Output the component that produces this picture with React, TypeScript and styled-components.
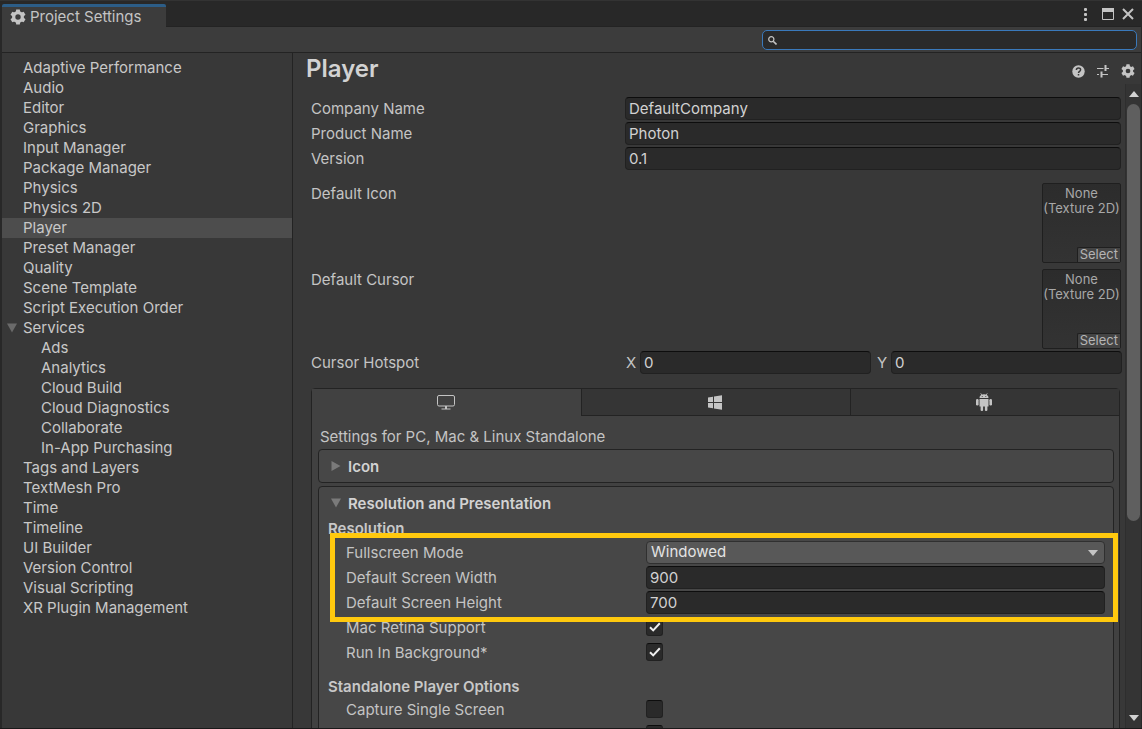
import React, { useId } from "react";
import styled, { createGlobalStyle, css } from "styled-components";

const GlobalStyle = createGlobalStyle`
  *, *::before, *::after { box-sizing: border-box; }
  html, body { margin: 0; padding: 0; background: #282828; }
  body, button, input, select {
    font-family: Inter, "Liberation Sans", sans-serif;
    font-size: 15px;
  }
`;

const Window = styled.div`
  display: flex;
  flex-direction: column;
  height: 100vh;
  overflow: hidden;
  padding: 3px 1px 0 2px;
  border-top: 1px solid #333;
  border-bottom: 1px solid #191919;
  background: #282828;
  color: #c4c4c4;
`;

const TitleBar = styled.header`
  display: flex;
  flex: none;
  height: 23px;
  align-items: stretch;
  justify-content: space-between;
  box-shadow: inset 0 -1px #232323;
`;

const WindowTab = styled.h1`
  display: flex;
  align-items: center;
  gap: 4px;
  width: 164px;
  margin: 0;
  padding: 0 8px 1px;
  border-top: 3px solid #2c5d87;
  border-radius: 2px 2px 0 0;
  background: #3c3c3c;
  font-size: 15px;
  font-weight: 400;
  white-space: nowrap;
`;

const WindowActions = styled.div`
  display: flex;
  align-items: center;
  gap: 8px;
  padding: 0 7px 3px 0;
`;

const IconButton = styled.button`
  display: flex;
  align-items: center;
  justify-content: center;
  padding: 0;
  border: 0;
  background: none;
  color: #c4c4c4;
`;

const Toolbar = styled.div`
  display: flex;
  flex: none;
  justify-content: flex-end;
  height: 26px;
  padding: 3px 4px 2px;
  border-bottom: 1px solid #232323;
  background: #3c3c3c;
`;

const SearchBox = styled.label`
  display: flex;
  align-items: center;
  width: 375px;
  height: 20px;
  padding: 0 5px;
  border: 1px solid #3a79bb;
  border-radius: 5px;
  background: #2a2a2a;
`;

const SearchInput = styled.input`
  flex: 1;
  min-width: 0;
  padding: 0 4px;
  border: 0;
  outline: 0;
  background: none;
  color: #d2d2d2;
`;

const Body = styled.div`
  display: flex;
  flex: 1;
  min-height: 0;
  background: #383838;
`;

const Sidebar = styled.nav`
  flex: none;
  width: 291px;
  padding-top: 5px;
  border-right: 1px solid #232323;
`;

const NavItem = styled.a<{ $depth: number; $selected: boolean }>`
  display: flex;
  align-items: center;
  height: 20px;
  padding-bottom: 2px;
  padding-left: ${(p) => (p.$depth ? 39 : 21)}px;
  background: ${(p) => (p.$selected ? "#4d4d4d" : "none")};
  color: #c8c8c8;
  text-decoration: none;
  white-space: nowrap;
`;

const NavArrow = styled.span`
  display: flex;
  width: 21px;
  margin-left: -21px;
  padding-top: 2px;
  padding-left: 5px;
`;

const Main = styled.main`
  display: flex;
  flex: 1;
  flex-direction: column;
  min-width: 0;
`;

const Heading = styled.div`
  display: flex;
  flex: none;
  align-items: center;
  justify-content: space-between;
  height: 31px;
  padding: 0 6px 0 13px;
`;

const PageTitle = styled.h2`
  margin: 0;
  color: #d2d2d2;
  font-size: 24px;
  font-weight: 600;
  line-height: 30px;
`;

const HeadingActions = styled.div`
  display: flex;
  gap: 12px;
  padding-top: 5px;
`;

const ScrollArea = styled.div`
  display: flex;
  flex: 1;
  min-height: 0;
`;

const Content = styled.div`
  flex: 1;
  min-width: 0;
  overflow: hidden;
  padding: 12px 3px 0 18px;
`;

const Scrollbar = styled.div`
  display: flex;
  flex: none;
  flex-direction: column;
  width: 16px;
  padding: 0 1px;
  border-left: 1px solid #2e2e2e;
  background: #343434;
`;

const ScrollButton = styled(IconButton)`
  height: 20px;
`;

const ScrollTrack = styled.div`
  display: flex;
  flex: 1;
  flex-direction: column;
`;

const ScrollThumb = styled.div`
  height: 69%;
  border-radius: 7px;
  background: #5f5f5f;
`;

const fieldBox = css`
  height: 23px;
  border: 1px solid #212121;
  border-top-color: #0d0d0d;
  border-radius: 4px;
  background: #2a2a2a;
`;

const Row = styled.div`
  display: flex;
  align-items: center;
  height: 25px;
`;

const RowLabel = styled.label<{ $nested?: boolean }>`
  flex: none;
  width: ${(p) => (p.$nested ? 300 : 314)}px;
  white-space: nowrap;
`;

const TextInput = styled.input`
  ${fieldBox}
  flex: 1;
  min-width: 0;
  padding: 0 3px;
  outline: 0;
  color: #d2d2d2;
`;

const IdentityRows = styled.section`
  padding-right: 1px;
  padding-bottom: 12px;
`;

const TextureRow = styled.div`
  display: flex;
  justify-content: space-between;
  height: 86px;
  padding-right: 1px;
`;

const TextureLabel = styled.span`
  line-height: 22px;
`;

const TextureSlot = styled.div`
  display: flex;
  flex-direction: column;
  align-items: flex-end;
  justify-content: space-between;
  width: 79px;
  height: 80px;
  border: 1px solid #1f1f1f;
  border-radius: 2px;
  background: linear-gradient(#2c2c2c, #333);
  color: #a8a8a8;
  font-size: 13px;
`;

const TextureName = styled.span`
  align-self: center;
  padding-top: 2px;
  line-height: 15px;
  text-align: center;
  white-space: nowrap;
`;

const SelectButton = styled.button`
  height: 15px;
  padding: 0 2px 1px;
  border: 0;
  border-top: 1px solid #1f1f1f;
  border-left: 1px solid #1f1f1f;
  border-radius: 2px 0 0 0;
  background: #444;
  color: #b4b4b4;
  font-size: 13px;
  line-height: 13px;
`;

const HotspotRow = styled(Row)`
  margin-top: -5px;
`;

const AxisLabel = styled.label`
  flex: none;
  width: 15px;
  padding-left: 1px;
`;

const AxisGap = styled.span`
  flex: none;
  width: 5px;
`;

const PlatformPanel = styled.section`
  margin-top: 13px;
  margin-right: 2px;
  border: 1px solid #232323;
  border-radius: 4px 4px 0 0;
  background: #414141;
`;

const PlatformTabs = styled.div`
  display: grid;
  grid-template-columns: repeat(3, 1fr);
`;

const PlatformTab = styled(IconButton)<{ $active?: boolean }>`
  height: 27px;
  padding-right: 2px;
  background: ${(p) => (p.$active ? "#414141" : "#353535")};
  border-bottom: 1px solid ${(p) => (p.$active ? "#414141" : "#232323")};
  & + & { border-left: 1px solid #232323; }
`;

const PlatformBody = styled.div`
  padding: 9px 5px 0 6px;
`;

const PlatformTitle = styled.p`
  margin: 0 0 0 2px;
  line-height: 24px;
`;

const Group = styled.section`
  margin-bottom: 3px;
  border: 1px solid #232323;
  border-radius: 4px;
  background: #474747;
`;

const GroupToggle = styled.button`
  display: flex;
  align-items: center;
  gap: 7px;
  width: 100%;
  height: 32px;
  padding: 0 12px;
  border: 0;
  background: none;
  color: #d2d2d2;
  font-weight: 600;
`;

const GroupBody = styled.div`
  padding: 0 8px 8px 9px;
`;

const SubHeading = styled.h3`
  margin: 0;
  color: #c8c8c8;
  font-size: 15px;
  font-weight: 600;
  line-height: 20px;
`;

const Indented = styled.div`
  padding-left: 18px;
`;

const HighlightArea = styled(Indented)`
  position: relative;
  padding-top: 1px;
`;

const HighlightFrame = styled.div`
  position: absolute;
  z-index: 1;
  top: -6px;
  right: -13px;
  bottom: -7px;
  left: 2px;
  border: 5px solid #ffc90e;
  pointer-events: none;
`;

const SelectWrap = styled.div`
  display: grid;
  flex: 1;
  align-items: center;
  min-width: 0;
`;

const Dropdown = styled.select`
  grid-area: 1 / 1;
  width: 100%;
  height: 23px;
  padding: 0 4px 2px;
  appearance: none;
  border: 1px solid #303030;
  border-radius: 4px;
  outline: 0;
  background: #585858;
  color: #e4e4e4;
`;

const DropdownArrow = styled.svg`
  grid-area: 1 / 1;
  justify-self: end;
  margin-right: 7px;
  pointer-events: none;
`;

const CheckWrap = styled.span`
  display: grid;
  place-items: center;
  padding-bottom: 2px;
`;

const Checkbox = styled.input`
  grid-area: 1 / 1;
  appearance: none;
  width: 17px;
  height: 18px;
  margin: 0;
  border: 1px solid #212121;
  border-top-color: #0d0d0d;
  border-radius: 3px;
  background: #2a2a2a;
`;

const CheckMark = styled.svg`
  grid-area: 1 / 1;
  pointer-events: none;
`;

const Spacer = styled.div`
  height: 12px;
`;

function GearIcon({ size }: { size: number }) {
  const teeth = [0, 60, 120, 180, 240, 300];
  return (
    <svg width={size} height={size} viewBox="0 0 16 16" fill="currentColor" aria-hidden="true">
      <circle cx="8" cy="8" r="4.3" fill="none" stroke="currentColor" strokeWidth="3.2" />
      {teeth.map((a) => (
        <path key={a} d="M5.700 3.4 6.200 .4h3.600L10.300 3.4z" transform={`rotate(${a} 8 8)`} />
      ))}
    </svg>
  );
}

function Triangle({ dir, color = "#7a7a7a" }: { dir: "down" | "right"; color?: string }) {
  return (
    <svg width="10" height="10" viewBox="0 0 10 10" fill={color} aria-hidden="true">
      <path d={dir === "down" ? "M0 .5h10L5 9.5z" : "M.5 0v10L9.5 5z"} />
    </svg>
  );
}

type NavEntry = { label: string; depth?: number; open?: boolean };

const entries: NavEntry[] = [
  { label: "Adaptive Performance" },
  { label: "Audio" },
  { label: "Editor" },
  { label: "Graphics" },
  { label: "Input Manager" },
  { label: "Package Manager" },
  { label: "Physics" },
  { label: "Physics 2D" },
  { label: "Player" },
  { label: "Preset Manager" },
  { label: "Quality" },
  { label: "Scene Template" },
  { label: "Script Execution Order" },
  { label: "Services", open: true },
  { label: "Ads", depth: 1 },
  { label: "Analytics", depth: 1 },
  { label: "Cloud Build", depth: 1 },
  { label: "Cloud Diagnostics", depth: 1 },
  { label: "Collaborate", depth: 1 },
  { label: "In-App Purchasing", depth: 1 },
  { label: "Tags and Layers" },
  { label: "TextMesh Pro" },
  { label: "Time" },
  { label: "Timeline" },
  { label: "UI Builder" },
  { label: "Version Control" },
  { label: "Visual Scripting" },
  { label: "XR Plugin Management" },
];

function TextRow({ label, value, nested }: { label: string; value: string; nested?: boolean }) {
  const id = useId();
  return (
    <Row>
      <RowLabel htmlFor={id} $nested={nested}>{label}</RowLabel>
      <TextInput id={id} type="text" defaultValue={value} />
    </Row>
  );
}

function CheckRow({ label, checked = false }: { label?: string; checked?: boolean }) {
  const id = useId();
  const [on, setOn] = React.useState(checked);
  return (
    <Row>
      <RowLabel htmlFor={id} $nested>{label}</RowLabel>
      <CheckWrap>
        <Checkbox
          id={id}
          type="checkbox"
          aria-label={label ?? "Player option"}
          checked={on}
          onChange={() => setOn(!on)}
        />
        {on && (
          <CheckMark width="12" height="10" viewBox="0 0 12 10" fill="none" stroke="#eee" strokeWidth="2" aria-hidden="true">
            <path d="M1 5.2 4.2 8.4 10.8 1.2" />
          </CheckMark>
        )}
      </CheckWrap>
    </Row>
  );
}

function TextureField({ label }: { label: string }) {
  return (
    <TextureRow>
      <TextureLabel>{label}</TextureLabel>
      <TextureSlot>
        <TextureName>None<br />(Texture 2D)</TextureName>
        <SelectButton type="button">Select</SelectButton>
      </TextureSlot>
    </TextureRow>
  );
}

export default function App() {
  return (
    <>
      <GlobalStyle />
      <Window>
        <TitleBar>
          <WindowTab><GearIcon size={16} />Project Settings</WindowTab>
          <WindowActions>
            <IconButton type="button" aria-label="Menu">
              <svg width="16" height="14" viewBox="0 0 16 14" fill="currentColor" aria-hidden="true">
                <rect x="6" y="1" width="3" height="3" rx="1" /><rect x="6" y="6" width="3" height="3" rx="1" /><rect x="6" y="11" width="3" height="3" rx="1" />
              </svg>
            </IconButton>
            <IconButton type="button" aria-label="Maximize">
              <svg width="12" height="12" viewBox="0 0 12 12" aria-hidden="true">
                <path d="M.5 .5h11v11H.5z" fill="none" stroke="currentColor" /><path d="M0 0h12v4H0z" fill="currentColor" />
              </svg>
            </IconButton>
            <IconButton type="button" aria-label="Close">
              <svg width="12" height="12" viewBox="0 0 12 12" fill="none" stroke="currentColor" strokeWidth="2" aria-hidden="true">
                <path d="M1 1l10 10M11 1 1 11" />
              </svg>
            </IconButton>
          </WindowActions>
        </TitleBar>
        <Toolbar>
          <SearchBox>
            <svg width="9" height="9" viewBox="0 0 9 9" fill="none" stroke="#c4c4c4" aria-hidden="true">
              <circle cx="3.3" cy="3.3" r="2.6" strokeWidth="1.2" /><path d="M5.2 5.2 8.5 8.5" strokeWidth="1.6" />
            </svg>
            <SearchInput type="text" aria-label="Search" />
          </SearchBox>
        </Toolbar>
        <Body>
          <Sidebar>
            {entries.map((e) => (
              <NavItem key={e.label} href="#" $depth={e.depth ?? 0} $selected={e.label === "Player"}>
                {e.open && <NavArrow><Triangle dir="down" color="#6a6a6a" /></NavArrow>}
                {e.label}
              </NavItem>
            ))}
          </Sidebar>
          <Main>
            <Heading>
              <PageTitle>Player</PageTitle>
              <HeadingActions>
                <IconButton type="button" aria-label="Help">
                  <svg width="13" height="13" viewBox="0 0 13 13" aria-hidden="true">
                    <circle cx="6.5" cy="6.5" r="6.2" fill="currentColor" />
                    <path d="M4.4 5c0-2.700 4.200-2.700 4.200-.2 0 1.500-2.100 1.500-2.100 3.200M6.500 9v1.600" fill="none" stroke="#383838" strokeWidth="1.500" />
                  </svg>
                </IconButton>
                <IconButton type="button" aria-label="Presets">
                  <svg width="12" height="13" viewBox="0 0 12 13" fill="none" stroke="currentColor" aria-hidden="true">
                    <path d="M0 3.500h6.500M9 3.500h3M0 9.500h2M5 9.500h6" strokeWidth="1.200" /><path d="M8.500 0v6M4.500 6.500v6" strokeWidth="2" />
                  </svg>
                </IconButton>
                <IconButton type="button" aria-label="Options"><GearIcon size={14} /></IconButton>
              </HeadingActions>
            </Heading>
            <ScrollArea>
              <Content>
                <IdentityRows>
                  <TextRow label="Company Name" value="DefaultCompany" />
                  <TextRow label="Product Name" value="Photon" />
                  <TextRow label="Version" value="0.1" />
                </IdentityRows>
                <TextureField label="Default Icon" />
                <TextureField label="Default Cursor" />
                <HotspotRow>
                  <RowLabel as="span">Cursor Hotspot</RowLabel>
                  <AxisLabel htmlFor="hotspot-x">X</AxisLabel>
                  <TextInput id="hotspot-x" type="text" defaultValue="0" />
                  <AxisGap />
                  <AxisLabel htmlFor="hotspot-y">Y</AxisLabel>
                  <TextInput id="hotspot-y" type="text" defaultValue="0" />
                </HotspotRow>
                <PlatformPanel>
                  <PlatformTabs>
                    <PlatformTab type="button" $active aria-label="Standalone">
                      <svg width="18" height="15" viewBox="0 0 18 15" fill="none" stroke="currentColor" aria-hidden="true">
                        <rect x=".5" y=".5" width="17" height="10.500" rx="1.500" /><path d="M9 11v3" strokeWidth="2" /><path d="M4.500 14h9" />
                      </svg>
                    </PlatformTab>
                    <PlatformTab type="button" aria-label="Windows">
                      <svg width="14" height="15" viewBox="0 0 14 15" fill="currentColor" aria-hidden="true">
                        <path d="M0 2.500 5 1.700V7H0zM6 1.500 14 .3V7H6zM0 8h5v5.300L0 12.500zM6 8h8v6.700L6 13.500z" />
                      </svg>
                    </PlatformTab>
                    <PlatformTab type="button" aria-label="Android">
                      <svg width="16" height="18" viewBox="0 0 16 18" fill="currentColor" aria-hidden="true">
                        <path d="M3.500 5C3.500 2.500 5.300 1.300 8 1.300S12.500 2.500 12.500 5z" />
                        <path d="M4.700.3 5.800 2M11.300.3 10.200 2" stroke="currentColor" strokeWidth=".8" />
                        <path d="M3.500 6h9v7.500h-9z" />
                        <rect x="0" y="6" width="2.600" height="6.500" rx="1.200" /><rect x="13.400" y="6" width="2.600" height="6.500" rx="1.200" />
                        <rect x="4.600" y="12" width="2.500" height="6" rx="1" /><rect x="8.900" y="12" width="2.500" height="6" rx="1" />
                        <circle cx="6.200" cy="3.400" r=".5" fill="#353535" /><circle cx="9.800" cy="3.400" r=".5" fill="#353535" />
                      </svg>
                    </PlatformTab>
                  </PlatformTabs>
                  <PlatformBody>
                    <PlatformTitle>Settings for PC, Mac &amp; Linux Standalone</PlatformTitle>
                    <Group>
                      <GroupToggle type="button" aria-expanded="false"><Triangle dir="right" />Icon</GroupToggle>
                    </Group>
                    <Group>
                      <GroupToggle type="button" aria-expanded="true"><Triangle dir="down" />Resolution and Presentation</GroupToggle>
                      <GroupBody>
                        <SubHeading>Resolution</SubHeading>
                        <HighlightArea>
                          <Row>
                            <RowLabel htmlFor="fullscreen-mode" $nested>Fullscreen Mode</RowLabel>
                            <SelectWrap>
                              <Dropdown id="fullscreen-mode" defaultValue="Windowed">
                                <option>Windowed</option>
                              </Dropdown>
                              <DropdownArrow width="10" height="6" viewBox="0 0 10 6" fill="#c4c4c4" aria-hidden="true"><path d="M0 0h10L5 6z" /></DropdownArrow>
                            </SelectWrap>
                          </Row>
                          <TextRow nested label="Default Screen Width" value="900" />
                          <TextRow nested label="Default Screen Height" value="700" />
                          <HighlightFrame />
                        </HighlightArea>
                        <Indented>
                          <CheckRow label="Mac Retina Support" checked />
                          <CheckRow label="Run In Background*" checked />
                        </Indented>
                        <Spacer />
                        <SubHeading>Standalone Player Options</SubHeading>
                        <Indented>
                          <CheckRow label="Capture Single Screen" />
                          <CheckRow />
                        </Indented>
                      </GroupBody>
                    </Group>
                  </PlatformBody>
                </PlatformPanel>
              </Content>
              <Scrollbar>
                <ScrollButton type="button" aria-label="Scroll up">
                  <svg width="10" height="6" viewBox="0 0 10 6" fill="#d2d2d2" aria-hidden="true"><path d="M0 6h10L5 0z" /></svg>
                </ScrollButton>
                <ScrollTrack><ScrollThumb /></ScrollTrack>
                <ScrollButton type="button" aria-label="Scroll down">
                  <svg width="10" height="6" viewBox="0 0 10 6" fill="#d2d2d2" aria-hidden="true"><path d="M0 0h10L5 6z" /></svg>
                </ScrollButton>
              </Scrollbar>
            </ScrollArea>
          </Main>
        </Body>
      </Window>
    </>
  );
}
